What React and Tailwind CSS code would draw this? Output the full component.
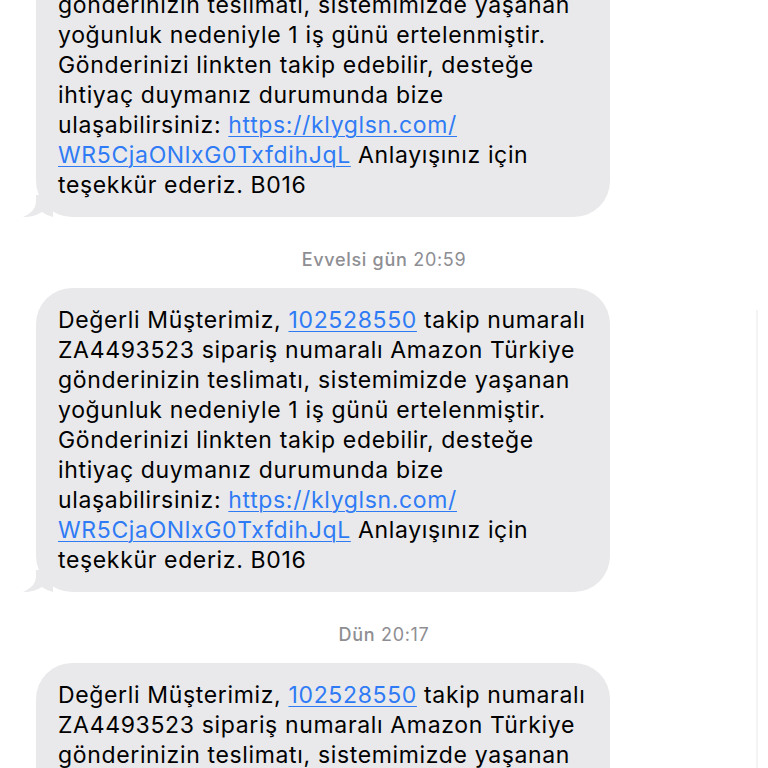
import React from 'react';

const Link = ({ children }) => (
  <span className="text-[#2f7bf5] underline decoration-1 underline-offset-[3px]">{children}</span>
);

const lines = [
  <>Değerli Müşterimiz, <Link>102528550</Link> takip numaralı</>,
  <>ZA4493523 sipariş numaralı Amazon Türkiye</>,
  <>gönderinizin teslimatı, sistemimizde yaşanan</>,
  <>yoğunluk nedeniyle 1 iş günü ertelenmiştir.</>,
  <>Gönderinizi linkten takip edebilir, desteğe</>,
  <>ihtiyaç duymanız durumunda bize</>,
  <>ulaşabilirsiniz: <Link>https://klyglsn.com/</Link></>,
  <><Link>WR5CjaONlxG0TxfdihJqL</Link> Anlayışınız için</>,
  <>teşekkür ederiz. B016</>,
];

const Bubble = () => (
  <div className="relative ml-[36px] w-[574px]">
    {/* tail */}
    <svg className="absolute left-[-13px] bottom-0" width="30" height="22" viewBox="0 0 30 22">
      <path d="M13 0 L13 6 C13 13 9 18 0 22 C8 22 14 20 19 17 C22 19 26 21 30 22 L30 0 Z" fill="#e9e9eb" />
    </svg>
    <div className="relative bg-[#e9e9eb] rounded-[36px] pl-[22px] pr-[16px] py-[17px] text-[23px] leading-[30px] tracking-[0.65px] text-black">
      {lines.map((l, i) => (
        <div key={i} className="whitespace-nowrap">{l}</div>
      ))}
    </div>
  </div>
);

const Stamp = ({ day, time }) => (
  <div className="text-center text-[18px] leading-[22px] tracking-[0.7px] text-[#8e8e93] mt-[32px] mb-[17px]">
    <span className="font-medium">{day}</span> {time}
  </div>
);

export default function App() {
  return (
    <div className="relative w-full h-[768px] overflow-hidden bg-white" style={{ fontFamily: 'Inter, "Noto Sans", sans-serif' }}>
      <div className="flex flex-col mt-[-87px]">
        <Bubble />
        <Stamp day="Evvelsi gün" time="20:59" />
        <Bubble />
        <Stamp day="Dün" time="20:17" />
        <Bubble />
      </div>
      {/* scroll indicator */}
      <div className="absolute right-[10px] top-[310px] bottom-0 w-[2px] bg-[#f4f4f4]" />
    </div>
  );
}
